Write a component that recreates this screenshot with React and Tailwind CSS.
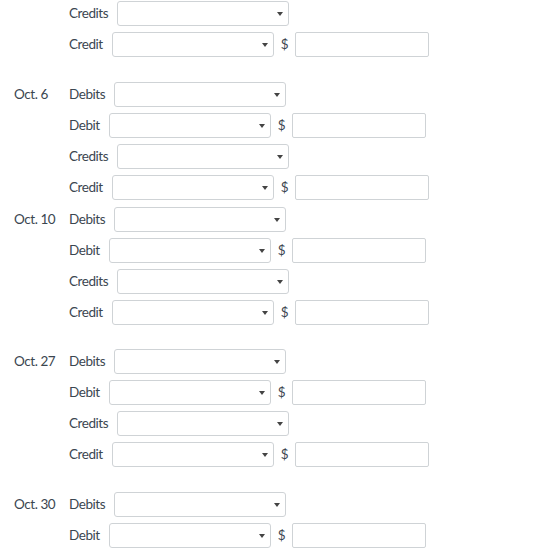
import React from "react";

const groups = [
  { date: "", gap: "", rows: ["Credits", "Credit"] },
  { date: "Oct. 6", gap: "mt-[25px]", rows: ["Debits", "Debit", "Credits", "Credit"] },
  { date: "Oct. 10", gap: "mt-[7px]", rows: ["Debits", "Debit", "Credits", "Credit"] },
  { date: "Oct. 27", gap: "mt-[24px]", rows: ["Debits", "Debit", "Credits", "Credit"] },
  { date: "Oct. 30", gap: "mt-[25px]", rows: ["Debits", "Debit"] },
];

const SelectBox = ({ wide }) => (
  <div
    className={`${
      wide ? "w-[172px]" : "w-[162px]"
    } h-[25px] border border-[#cfd3d6] rounded-[3px] bg-white flex items-center justify-end pr-[5px]`}
  >
    <span className="w-0 h-0 border-l-[3px] border-r-[3px] border-t-[4px] border-l-transparent border-r-transparent border-t-[#444]" />
  </div>
);

const Row = ({ date, label }) => {
  const isTotal = label === "Debits" || label === "Credits";
  return (
    <div className="flex items-center h-[25px]">
      <div className="w-[55px] shrink-0">{date}</div>
      <span className="mr-[9px]">{label}</span>
      <SelectBox wide={isTotal} />
      {!isTotal && (
        <>
          <span className="ml-[7px] mr-[6px] tracking-normal">$</span>
          <div className="w-[134px] h-[25px] border border-[#cfd3d6] rounded-[2px] bg-white" />
        </>
      )}
    </div>
  );
};

export default function App() {
  return (
    <div
      className="bg-white w-[560px] h-[550px] overflow-hidden pl-[14px] pt-[1px] text-[13.5px] tracking-[-0.45px] text-[#3b4650]"
      style={{ fontFamily: "Lato, 'Liberation Sans', sans-serif" }}
    >
      {groups.map((g, gi) => (
        <div key={gi} className={`flex flex-col gap-[6px] ${g.gap}`}>
          {g.rows.map((label, ri) => (
            <Row key={ri} date={ri === 0 ? g.date : ""} label={label} />
          ))}
        </div>
      ))}
    </div>
  );
}
